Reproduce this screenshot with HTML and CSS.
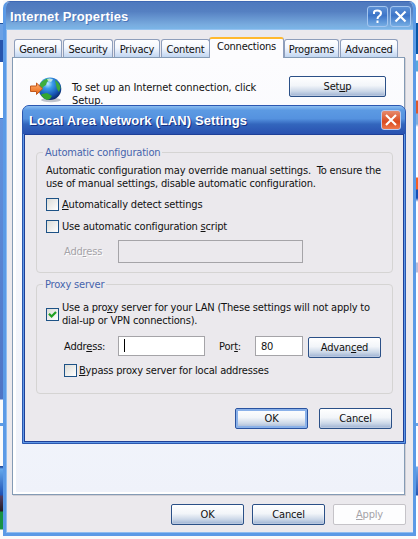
FILE: index.html
```html
<!DOCTYPE html>
<html lang="en">
<head>
<meta charset="utf-8">
<title>Internet Properties</title>
<link rel="stylesheet" href="styles.css">
</head>
<body>
<div class="desktop">
  <div class="strip strip-left"></div>
  <section class="window">
    <header class="titlebar">
      <h1>Internet Properties</h1>
      <button class="caption" aria-label="Help"><svg width="19" height="19" viewBox="0 0 19 19"><path d="M6 7V5.5Q6 3.5 9.3 3.5Q13 3.5 13 6.2Q13 7.8 11.2 9Q9.5 10 9.5 12M9.5 13.6V16" fill="none" stroke="#fff" stroke-width="2"/></svg></button>
      <button class="caption" aria-label="Close"><svg width="19" height="19" viewBox="0 0 19 19"><path d="M4.5 4.5L14.5 14.5M14.5 4.5L4.5 14.5" stroke="#fff" stroke-width="2.2"/></svg></button>
    </header>
    <nav class="tabs">
      <span class="tab general">General</span>
      <span class="tab security">Security</span>
      <span class="tab privacy">Privacy</span>
      <span class="tab content">Content</span>
      <span class="tab connections">Connections</span>
      <span class="tab programs">Programs</span>
      <span class="tab advanced">Advanced</span>
    </nav>
    <main class="panel">
      <div class="setup-row">
        <svg class="globe" width="36" height="28" viewBox="0 0 36 28">
          <defs>
            <radialGradient id="sea" cx="40%" cy="28%" r="72%"><stop offset="0" stop-color="#c3ecff"/><stop offset=".3" stop-color="#3b9bea"/><stop offset=".75" stop-color="#1453b2"/><stop offset="1" stop-color="#0a2b6e"/></radialGradient>
            <linearGradient id="arrow" x2="0" y2="1"><stop offset="0" stop-color="#ffb070"/><stop offset="1" stop-color="#ea6411"/></linearGradient>
          </defs>
          <ellipse cx="22" cy="24" rx="10" ry="2.2" fill="#bfc3cc"/>
          <circle cx="21" cy="12.7" r="11.3" fill="url(#sea)"/>
          <path d="M11 8Q14 3 20 2.5L21 4L18 6L17 9L14 11L13 14L10.500 15Z" fill="#3fae3c"/>
          <path d="M13 18L18 17L23 20L21 23L18 24Q14 22.500 12 19Z" fill="#35a630"/>
          <path d="M26 4Q31 7 31.500 12L30 16L28 13L27 9Z" fill="#3aa83c"/>
          <path d="M18 3Q21 2 24 3.500L22 6L19 5Z" fill="#d9f5e5" opacity=".8"/>
          <path d="M1.500 10H7.500V7L13.500 12.700L7.500 18.500V15.500H1.500Z" fill="url(#arrow)" stroke="#c2581c"/>
        </svg>
        <p>To set up an Internet connection, click<br>Setup.</p>
        <button class="btn setup">Set<u>u</u>p</button>
      </div>
    </main>
    <footer class="footer">
      <button class="btn">OK</button>
      <button class="btn">Cancel</button>
      <button class="btn disabled"><u>A</u>pply</button>
    </footer>
  </section>
  <div class="strip strip-right"></div>

  <section class="dialog">
    <header class="dialog-title">
      <h2>Local Area Network (LAN) Settings</h2>
      <button class="caption close-red" aria-label="Close"><svg width="18" height="18" viewBox="0 0 18 18"><path d="M4 4L14 14M14 4L4 14" stroke="#fff" stroke-width="2.1"/></svg></button>
    </header>
    <div class="dialog-body">
      <fieldset class="auto">
        <legend>Automatic configuration</legend>
        <p class="note">Automatic configuration may override manual settings.&nbsp; To ensure the<br>use of manual settings, disable automatic configuration.</p>
        <div class="check detect"><i class="box"></i><span><u>A</u>utomatically detect settings</span></div>
        <div class="check script"><i class="box"></i><span>Use automatic configuration <u>s</u>cript</span></div>
        <div class="field script-field"><span class="label muted">Add<u>r</u>ess</span><span class="input off"></span></div>
      </fieldset>
      <fieldset class="proxy">
        <legend>Proxy server</legend>
        <div class="check use-proxy"><i class="box"><svg width="9" height="9" viewBox="0 0 9 9"><path d="M1 3.700L3.600 6.500L8 2" fill="none" stroke="#21a121" stroke-width="2.200"/></svg></i><span>Use a pro<u>x</u>y server for your LAN (These settings will not apply to<br>dial-up or VPN connections).</span></div>
        <div class="field proxy-field"><span class="label">Addr<u>e</u>ss:</span><span class="input address"><i class="caret"></i></span><span class="port-label">Por<u>t</u>:</span><span class="input port">80</span><button class="btn adv">Advan<u>c</u>ed</button></div>
        <div class="check bypass"><i class="box"></i><span><u>B</u>ypass proxy server for local addresses</span></div>
      </fieldset>
      <div class="actions"><button class="btn default">OK</button><button class="btn">Cancel</button></div>
    </div>
  </section>
</div>
</body>
</html>
```
FILE: styles.css
```css
* { box-sizing: border-box; }
body {
  margin: 0;
  overflow: hidden;
  background: #fafafa;
  font: 11px/13px "DejaVu Sans Condensed", "DejaVu Sans", sans-serif;
  font-stretch: condensed;
  letter-spacing: -0.18px;
  color: #111;
}
h1, h2, p { margin: 0; }
button { font: inherit; letter-spacing: inherit; color: inherit; padding: 0; }
u { text-decoration: underline; text-underline-offset: 1px; text-decoration-skip-ink: none; }
.desktop {
  position: relative;
  display: grid;
  grid-template-columns: 3px 413px 2px;
  height: 539px;
  white-space: nowrap;
}
.strip-left { background: linear-gradient(#fff 0 23px, #20519b 23px 24px, #6ba1e5 24px 40px, #2754ac 40px 62px, #fff 62px 118px, #3974cd 118px 119px, #6394df 119px, #4e73c4 399px, #fafafa 400px 423px, #5d9be4 423px 426px, #fafafa 426px 466px, #234da0 466px 467px, #65a8ec 469px, #1f51b3 495px, #513d65 496px, #231c22 511px, #179243 512px 529px, #fafafa 530px); }
.strip-right { background: linear-gradient(#fff 0 23px, #0755a5 23px 54px, #fff 54px 60px, #58a9dd 61px 71px, #fff 72px 100px, #db592e 101px 113px, #82b0dc 114px 124px, #fff 127px 177px, #f65f24 178px 189px, #164eb3 190px 198px, #fff 202px 262px, #b8bbd8 263px 272px, #fff 273px 423px, #6ba6e7 423px 426px, #fff 426px 466px, #72acec 467px, #2754ad 495px, #fff 496px); }
.window {
  height: 535px;
  margin-top: 1px;
  border: 3px solid #5b9ae6;
  border-top: 1px solid #3e68b4;
  border-radius: 7px 7px 0 0;
  background: #ebe9ed;
  box-shadow: inset 1px -1px #8ebcf0;
  overflow: hidden;
}
.titlebar {
  display: flex;
  align-items: flex-start;
  height: 28px;
  margin: 0 -2px;
  padding: 4px 4px 0 6px;
  border-bottom: 1px solid #94c2f0;
  background: linear-gradient(#4e79be, #5580c2 35%, #79acdf 85%, #7bb5e7);
}
h1, h2 { font: bold 13px/18px "Liberation Sans", sans-serif; letter-spacing: 0.15px; color: #fff; text-shadow: 1px 1px #4a76ba; }
h1 { flex: 1; padding-top: 2px; }
.caption {
  flex: none;
  width: 21px;
  height: 21px;
  margin-left: 2px;
  border: 1px solid #a3c5ef;
  border-radius: 3px;
  background: linear-gradient(#5c90d5, #3d75c8 45%, #75ade4);
  display: flex;
}
.tabs { display: flex; align-items: flex-end; height: 27px; padding-left: 8px; position: relative; }
.tab {
  height: 18px;
  margin-right: 1px;
  border: 1px solid #8e9ebb;
  border-bottom: 0;
  border-radius: 3px 3px 0 0;
  background: linear-gradient(#fff, #f3f7fe 45%, #c1d6f1);
  text-align: center;
  line-height: 19px;
}
.general { width: 48px; }
.security { width: 50px; }
.privacy { width: 46px; }
.content { width: 49px; margin-right: 0; }
.connections { width: 75px; height: 21px; margin: 0 0 -1px -1px; border-top: 2px solid #ffb92e; background: #fcfcfe; line-height: 15px; padding-bottom: 3px; }
.programs { width: 55px; }
.advanced { width: 58px; }
.panel {
  height: 438px;
  margin: 0 8px 0 6px;
  border: 1px solid #849bb5;
  box-shadow: 1px 1px #d0ced4, inset 3px -2px #fff;
  background: linear-gradient(#fcfcfe, #eff2fa);
}
.setup-row { display: flex; align-items: flex-start; padding: 18px 0 0 16px; }
.setup-row p { width: 217px; margin-left: 7px; padding-top: 5px; letter-spacing: -0.1px; }
.btn {
  width: 73px;
  height: 21px;
  border: 1px solid #2b5087;
  border-radius: 2px;
  background: linear-gradient(#fff, #f2f5f9 45%, #ccd8e8 75%, #9db1d2);
  box-shadow: inset 0 0 0 1px rgba(255, 255, 255, .25);
  text-align: center;
  line-height: 19px;
}
.setup { width: 97px; height: 21px; }
.footer { display: flex; gap: 8px; padding: 9px 0 0 165px; }
.disabled { background: #fdfdfe; border-color: #c5c3c8; color: #a5a3a8; }
.dialog {
  position: absolute;
  left: 22px;
  top: 102px;
  width: 384px;
  height: 329px;
  margin-top: 0;
  border: 1px solid #2b57b0;
  border-radius: 7px 7px 0 0;
  background: #5f98e6;
  overflow: hidden;
  padding: 0 1px 1px;
}
.dialog { top: 105px; height: 339px; }
.dialog-title {
  display: flex;
  height: 28px;
  margin: 0 -1px;
  padding: 4px 4px 0 6px;
  background: linear-gradient(#8bbdf0, #5c9ae3 15%, #5592df 45%, #3366bd 65%, #2951b0);
}
h2 { flex: 1; padding-top: 2px; text-shadow: 1px 1px #152f82; letter-spacing: 0.1px; }
.close-red { width: 20px; height: 20px; border-color: #b8c9ef; background: linear-gradient(#e78b6e, #d94a20 60%, #ef794c); }
.dialog-body { height: 308px; border: 1px solid #1e3f97; background: #ebe9ed; padding: 11px 10px 0 11px; }
fieldset { margin: 0; border: 1px solid #d5d4d3; border-radius: 4px; padding: 0 0 0 9px; min-width: 0; }
legend { padding: 0 2px; margin-left: -3px; color: #4664ac; height: 13px; }
.auto { height: 127px; }
.proxy { height: 116px; margin-top: 5px; }
.note { padding-top: 5px; }
.check { display: flex; align-items: center; gap: 3px; height: 13px; }
.box { width: 13px; height: 13px; flex: none; border: 1px solid #1d5286; background: linear-gradient(135deg, #dcdcd7, #fff); display: flex; align-items: center; justify-content: center; }
.detect { margin-top: 8px; }
.script { margin-top: 9px; }
.field { display: flex; }
.label { width: 54px; line-height: 21px; }
.muted { color: #a5a3a8; text-shadow: 1px 1px #fff; line-height: 24px; }
.script-field { margin: 7px 0 0 18px; }
.input { width: 185px; height: 23px; border: 1px solid #a5a4a8; background: #fff; }
.off { background: transparent; }
.use-proxy { height: 26px; margin-top: 10px; }
.proxy-field { margin: 9px 0 0 18px; }
.address { width: 87px; height: 20px; padding: 2px 5px; }
.caret { display: block; width: 1px; height: 13px; background: #000; }
.port-label { width: 50px; padding-left: 14px; line-height: 21px; }
.port { width: 48px; height: 20px; padding: 3px 5px; }
.adv { margin: 1px 0 0 5px; }
.bypass { margin: 6px 0 0 18px; gap: 2px; }
.actions { display: flex; justify-content: flex-end; gap: 11px; margin: 14px 0 0; padding-right: 1px; }
.default { box-shadow: inset 0 0 0 2px #8ab1e9; border-color: #2953a0; }
```
